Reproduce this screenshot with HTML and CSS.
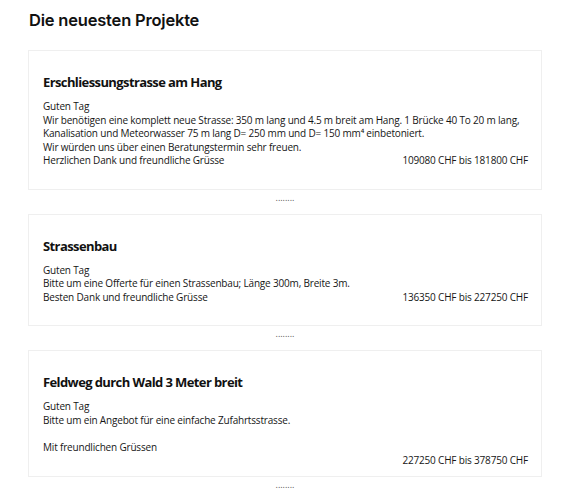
FILE: index.html
```html
<!DOCTYPE html>
<html lang="de">

<head>
  <meta charset="UTF-8" />
  <meta name="viewport" content="width=device-width, initial-scale=1.0" />
  <title>Die neuesten Projekte</title>
  <link rel="stylesheet" href="styles.css">
</head>

<body>
  <section class="projects">
    <h2 class="projects-title">Die neuesten Projekte</h2>

    <div class="project-card">
      <h3 class="project-name">Erschliessungstrasse am Hang</h3>
      <div class="project-text">
        <p>Guten Tag<br>Wir benötigen eine komplett neue Strasse: 350 m lang und 4.5 m breit am Hang. 1 Brücke 40 To 20 m lang, Kanalisation und Meteorwasser 75 m lang D= 250 mm und D= 150 mm⁴ einbetoniert.<br>Wir würden uns über einen Beratungstermin sehr freuen.</p>
        <div class="project-foot">
          <span>Herzlichen Dank und freundliche Grüsse</span>
          <span class="project-price">109080 CHF bis 181800 CHF</span>
        </div>
      </div>
    </div>
    <div class="more">........</div>

    <div class="project-card">
      <h3 class="project-name">Strassenbau</h3>
      <div class="project-text">
        <p>Guten Tag<br>Bitte um eine Offerte für einen Strassenbau; Länge 300m, Breite 3m.</p>
        <div class="project-foot">
          <span>Besten Dank und freundliche Grüsse</span>
          <span class="project-price">136350 CHF bis 227250 CHF</span>
        </div>
      </div>
    </div>
    <div class="more">........</div>

    <div class="project-card project-card--short">
      <h3 class="project-name">Feldweg durch Wald 3 Meter breit</h3>
      <div class="project-text">
        <p>Guten Tag<br>Bitte um ein Angebot für eine einfache Zufahrtsstrasse.<br><br>Mit freundlichen Grüssen</p>
        <div class="project-foot">
          <span></span>
          <span class="project-price">227250 CHF bis 378750 CHF</span>
        </div>
      </div>
    </div>
    <div class="more">........</div>
  </section>
</body>

</html>
```

FILE: styles.css
```css
body {
  margin: 0;
  background-color: #fff;
  color: #111;
  font-family: 'Open Sans', sans-serif;
}

.projects {
  padding: 0 19px 0 28px;
}

.projects-title {
  margin: 0;
  padding: 9px 0 19px 1px;
  font-family: 'Inter', sans-serif;
  font-size: 16.5px;
  font-weight: 600;
  letter-spacing: -0.2px;
  line-height: 22px;
  color: #111;
}

.project-card {
  border: 1px solid #efefef;
  padding: 22px 13px 21px 14px;
}

.project-card--short {
  padding-bottom: 8px;
}

.project-name {
  margin: 0 0 9px;
  font-size: 13px;
  font-weight: 700;
  letter-spacing: -0.6px;
  line-height: 18px;
}

.project-text {
  font-size: 10px;
  letter-spacing: -0.18px;
  line-height: 13.5px;
  color: #161616;
}

.project-text p {
  margin: 0;
}

.project-foot {
  display: flex;
  justify-content: space-between;
}

.more {
  text-align: center;
  font-size: 9px;
  line-height: 16px;
  padding-bottom: 8px;
  color: #555;
}
```
